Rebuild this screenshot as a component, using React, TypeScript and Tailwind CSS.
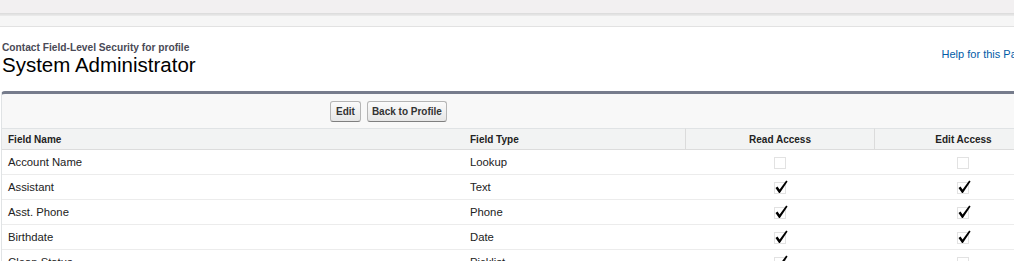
const rows = [
  { name: "Account Name", type: "Lookup", read: false, edit: false },
  { name: "Assistant", type: "Text", read: true, edit: true },
  { name: "Asst. Phone", type: "Phone", read: true, edit: true },
  { name: "Birthdate", type: "Date", read: true, edit: true },
  { name: "Clean Status", type: "Picklist", read: true, edit: false },
];

const Check = ({ on }: { on: boolean }) => (
  <svg width="16" height="16" viewBox="0 0 16 16" className="block">
    <rect x="1.5" y="3.5" width="11" height="11" fill="none" stroke="#c4c4c4" strokeDasharray="1 1" />
    {on && <path d="M2.5 9 L4.5 7.6 L6.6 10.4 L13.2 1.6 L14.6 2.6 L6.9 14 L6 14 Z" fill="#000" />}
  </svg>
);

export default function App() {
  return (
    <div className="w-full h-[261px] overflow-hidden bg-white font-['Liberation_Sans',Arial,sans-serif] text-[#222]">
      <div className="w-[1060px]">
        {/* app chrome */}
        <div className="h-[13px] bg-[#f2f0f1]" />
        <div className="h-[3px] bg-gradient-to-b from-[#dadada] to-[#ececec]" />
        <div className="h-[11px] bg-[#f6f6f6] border-b border-[#e2e2e2]" />

        {/* page title */}
        <div className="flex items-start justify-between pt-[15px] pl-[2px] pr-[31px] h-[64px]">
          <div>
            <div className="text-[10.2px] leading-[12px] font-bold text-[#4a4a56]">
              Contact Field-Level Security for profile
            </div>
            <h1 className="text-[20.5px] leading-[22px] text-black">System Administrator</h1>
          </div>
          <a className="text-[11px] text-[#015ba7] mt-[4px]">Help for this Page</a>
        </div>

        {/* block */}
        <div className="ml-px border-t-[3px] border-t-[#767c8c] border-l border-l-[#e0e3e5] rounded-tl-[4px] bg-[#f8f8f8]">
          <div className="h-[34px] flex items-center gap-[6px] pl-[328px]">
            <button className="h-[21px] px-[5px] rounded-[3px] border border-[#b5b5b5] border-b-[#7f7f7f] bg-gradient-to-b from-[#fbfbfb] to-[#e6e6e6] text-[10px] font-bold text-[#333]">
              Edit
            </button>
            <button className="h-[21px] px-[4px] rounded-[3px] border border-[#b5b5b5] border-b-[#7f7f7f] bg-gradient-to-b from-[#fbfbfb] to-[#e6e6e6] text-[10px] font-bold text-[#333]">
              Back to Profile
            </button>
          </div>

          <div className="grid grid-cols-[462px_221px_189px_178px] bg-white text-[11.3px]">
            <div className="h-[22px] flex items-center pl-[6px] bg-[#f2f3f3] border-t border-[#e0e3e5] border-b border-b-[#dcdcdc] text-[10px] font-bold">Field Name</div>
            <div className="h-[22px] flex items-center pl-[6px] bg-[#f2f3f3] border-t border-[#e0e3e5] border-b border-b-[#dcdcdc] text-[10px] font-bold">Field Type</div>
            <div className="h-[22px] flex items-center justify-center bg-[#f2f3f3] border-t border-[#e0e3e5] border-b border-b-[#dcdcdc] border-l border-l-[#dbdbdb] text-[10px] font-bold">Read Access</div>
            <div className="h-[22px] flex items-center justify-center bg-[#f2f3f3] border-t border-[#e0e3e5] border-b border-b-[#dcdcdc] border-l border-l-[#dbdbdb] text-[10px] font-bold">Edit Access</div>

            {rows.map((r) => (
              <div key={r.name} className="contents">
                <div className="h-[25px] flex items-center pl-[6px] border-b border-[#ececec]">{r.name}</div>
                <div className="h-[25px] flex items-center pl-[6px] border-b border-[#ececec]">{r.type}</div>
                <div className="h-[25px] flex items-center justify-center pl-[2px] border-b border-[#ececec]"><Check on={r.read} /></div>
                <div className="h-[25px] flex items-center justify-center pl-[2px] border-b border-[#ececec]"><Check on={r.edit} /></div>
              </div>
            ))}
          </div>
        </div>
      </div>
    </div>
  );
}
